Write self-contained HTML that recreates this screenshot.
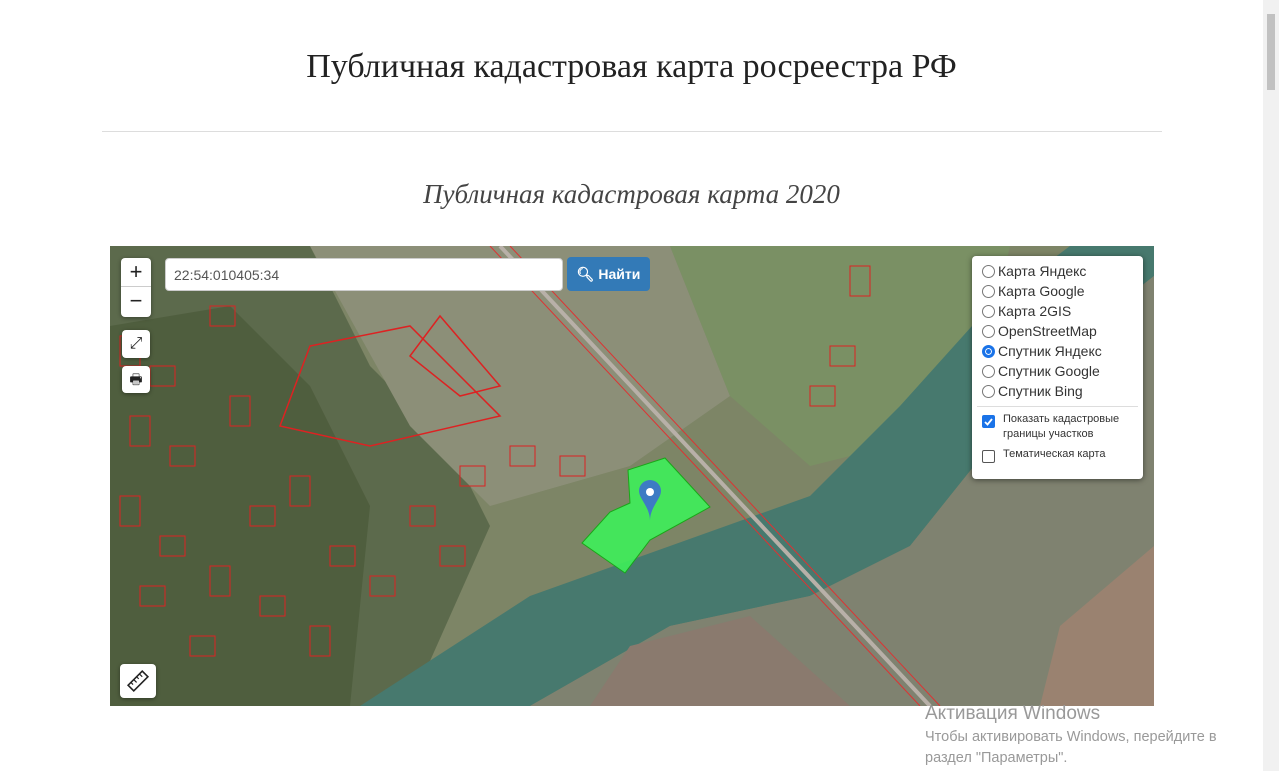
<!DOCTYPE html>
<html><head><meta charset="utf-8"><style>
body{margin:0;width:1279px;height:771px;overflow:hidden;background:#fff;font-family:"Liberation Sans",sans-serif;position:relative}
.sb{position:absolute;right:0;top:0;width:16px;height:771px;background:#f1f1f1}
.sb div{position:absolute;left:4px;top:14px;width:8px;height:76px;background:#c1c1c1}
h1{position:absolute;top:48px;left:0;width:1263px;text-align:center;margin:0;font:400 34px "Liberation Serif",serif;color:#222}
hr{position:absolute;top:131px;left:102px;width:1060px;border:0;border-top:1px solid #ddd;margin:0}
h2{position:absolute;top:179px;left:0;width:1263px;text-align:center;margin:0;font:italic 400 27px "Liberation Serif",serif;color:#444}
.map{position:absolute;left:110px;top:246px;width:1044px;height:460px;overflow:hidden}
.btn{position:absolute;background:#fff;border-radius:4px;box-shadow:0 1px 4px rgba(0,0,0,.4);text-align:center;color:#222}
.inp{position:absolute;left:55px;top:12px;width:398px;height:33px;background:#fff;border:1px solid #ccc;border-radius:4px;font-size:14px;line-height:33px;padding-left:8px;color:#555;box-sizing:border-box}
.go{position:absolute;left:457px;top:11px;width:83px;height:34px;background:#337ab7;border-radius:4px;color:#fff;font-weight:bold;font-size:14px;line-height:34px;text-align:center}
.panel{position:absolute;left:862px;top:10px;width:171px;height:223px;background:#fff;border-radius:4px;box-shadow:0 1px 6px rgba(0,0,0,.5);font-size:14px;color:#333}
.r{height:20px;line-height:20px;padding-left:10px;display:flex;align-items:center}
.r i{width:11px;height:11px;border:1px solid #777;border-radius:50%;display:inline-block;margin-right:3px}
.c{font-size:11px;display:flex;padding-left:10px;line-height:15px}
.c i{width:11px;height:11px;border:1px solid #555;border-radius:2px;margin:3px 8px 0 0;flex:none;position:relative}
.wm{position:absolute;left:925px;top:703px;color:#999;font-size:19px}
.wm2{position:absolute;left:925px;top:727px;color:#999;font-size:14.5px;line-height:21px}
</style></head><body>
<div class="sb"><div></div></div>
<h1>Публичная кадастровая карта росреестра РФ</h1>
<hr>
<h2>Публичная кадастровая карта 2020</h2>
<div class="map">
<svg width="1044" height="460" viewBox="0 0 1044 460">
<rect width="1044" height="460" fill="#7d8566"/>
<polygon points="0,0 200,0 260,120 340,200 380,280 300,460 0,460" fill="#5c6a4c"/>
<polygon points="200,0 560,0 620,150 520,220 380,260 300,180" fill="#8c8f78"/>
<polygon points="560,0 900,0 860,180 700,220 620,150" fill="#7a9064"/>
<polygon points="0,80 120,60 200,140 260,260 240,460 0,460" fill="#4f5e3e"/>
<polygon points="250,460 420,350 560,300 700,250 790,160 880,60 960,0 1044,0 1044,30 980,80 880,200 800,300 700,350 560,380 420,460" fill="#47796e"/>
<polygon points="420,460 560,380 700,350 800,300 880,200 980,80 1044,30 1044,460" fill="#7f8270"/>
<polygon points="520,400 640,370 740,460 480,460" fill="#8a7a6e"/>
<polygon points="950,380 1044,300 1044,460 930,460" fill="#9a8270"/>
<line x1="390" y1="0" x2="820" y2="460" stroke="#b8b0a8" stroke-width="4"/>
<line x1="380" y1="0" x2="810" y2="460" stroke="#d33" stroke-width="1"/>
<line x1="400" y1="0" x2="830" y2="460" stroke="#d33" stroke-width="1"/>
<polygon points="200,100 300,80 390,170 260,200 170,180" fill="none" stroke="#d22" stroke-width="1.5"/>
<polygon points="300,110 330,70 390,140 350,150" fill="none" stroke="#d22" stroke-width="1.5"/>
<g fill="none" stroke="#d22" stroke-width="1">
<rect x="10" y="90" width="20" height="30"/><rect x="40" y="120" width="25" height="20"/><rect x="20" y="170" width="20" height="30"/><rect x="60" y="200" width="25" height="20"/><rect x="10" y="250" width="20" height="30"/><rect x="50" y="290" width="25" height="20"/><rect x="100" y="320" width="20" height="30"/><rect x="150" y="350" width="25" height="20"/><rect x="200" y="380" width="20" height="30"/><rect x="30" y="340" width="25" height="20"/><rect x="80" y="390" width="25" height="20"/><rect x="140" y="260" width="25" height="20"/><rect x="220" y="300" width="25" height="20"/><rect x="300" y="260" width="25" height="20"/><rect x="350" y="220" width="25" height="20"/><rect x="400" y="200" width="25" height="20"/><rect x="450" y="210" width="25" height="20"/><rect x="260" y="330" width="25" height="20"/><rect x="120" y="150" width="20" height="30"/><rect x="180" y="230" width="20" height="30"/><rect x="330" y="300" width="25" height="20"/><rect x="100" y="60" width="25" height="20"/><rect x="700" y="140" width="25" height="20"/><rect x="720" y="100" width="25" height="20"/><rect x="740" y="20" width="20" height="30"/>
</g>
<polygon points="472,297 500,266 520,257 518,224 555,212 600,261 540,294 515,327" fill="#3ef05a" stroke="#1a1" stroke-width="1" opacity=".9"/>
<path d="M529 245 a11 11 0 0 1 22 0 c0 8 -11 16 -11 30 c0 -14 -11 -22 -11 -30z" fill="#3d7bc4"/>
<circle cx="540" cy="246" r="4" fill="#fff"/>
</svg>
<div class="btn" style="left:11px;top:12px;width:30px;height:59px;font-size:22px;line-height:28px">+<div style="border-top:1px solid #ccc">−</div></div>
<div class="btn" style="left:12px;top:84px;width:28px;height:28px;font-size:16px;line-height:28px">⤢</div>
<div class="btn" style="left:12px;top:120px;width:28px;height:27px;font-size:14px;line-height:27px">🖶</div>
<div class="btn" style="left:10px;top:418px;width:36px;height:34px"><svg width="36" height="34"><g transform="rotate(-45 18 17)"><rect x="8" y="13" width="20" height="8" fill="none" stroke="#222" stroke-width="1.6"/><path d="M12 13v3M16 13v4M20 13v3M24 13v4" stroke="#222" stroke-width="1.2"/></g></svg></div>
<div class="inp">22:54:010405:34</div>
<div class="go">🔍︎ Найти</div>
<div class="panel">
<div style="height:5px"></div>
<div class="r"><i></i>Карта Яндекс</div>
<div class="r"><i></i>Карта Google</div>
<div class="r"><i></i>Карта 2GIS</div>
<div class="r"><i></i>OpenStreetMap</div>
<div class="r"><i style="border:3px solid #1a73e8;width:7px;height:7px;box-shadow:inset 0 0 0 1px #fff;background:#1a73e8"></i>Спутник Яндекс</div>
<div class="r"><i></i>Спутник Google</div>
<div class="r"><i></i>Спутник Bing</div>
<div style="border-top:1px solid #ddd;margin:5px 5px 5px 5px"></div>
<div class="c"><i style="background:#1a73e8;border-color:#1a73e8"><svg width="11" height="11" style="position:absolute;left:0;top:0"><path d="M2 6l2.5 2.5L9 3" fill="none" stroke="#fff" stroke-width="1.8"/></svg></i>Показать кадастровые границы участков</div>
<div class="c" style="margin-top:5px"><i></i>Тематическая карта</div>
</div>
</div>
<div class="wm">Активация Windows</div>
<div class="wm2">Чтобы активировать Windows, перейдите в<br>раздел "Параметры".</div>
</body></html>
